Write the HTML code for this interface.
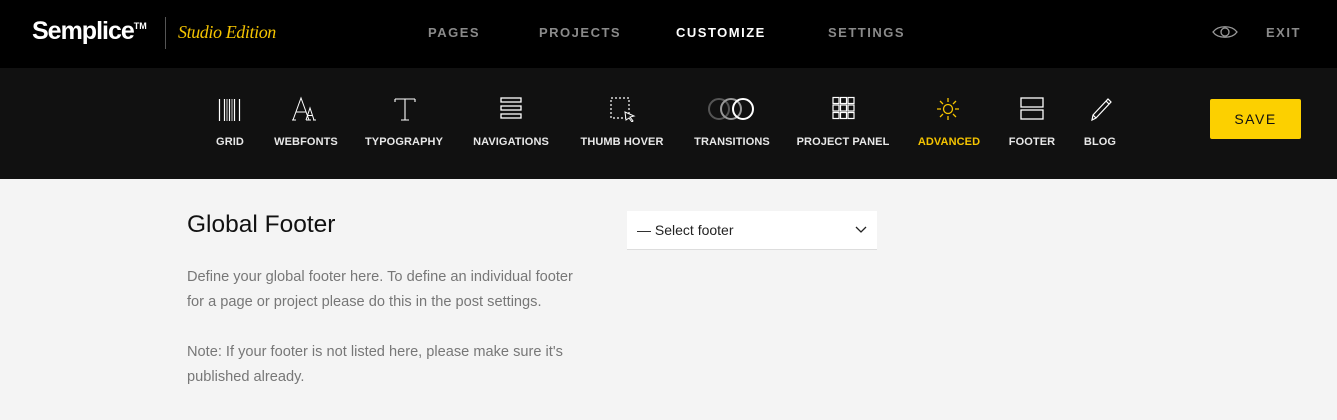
<!DOCTYPE html>
<html><head><meta charset="utf-8"><style>
*{margin:0;padding:0;box-sizing:border-box}
body{width:1337px;height:420px;background:#f4f4f4;font-family:"Liberation Sans",sans-serif;position:relative;overflow:hidden}
.top{position:absolute;left:0;top:0;width:1337px;height:68px;background:#000}
.sub{position:absolute;left:0;top:68px;width:1337px;height:111px;background:#111}
.a{position:absolute}
.nav{position:absolute;top:25px;font-size:13px;font-weight:bold;letter-spacing:1.5px;color:#8a8a8a}
.lbl{position:absolute;top:136px;font-size:11px;font-weight:bold;letter-spacing:.1px;color:#e8e8e8;transform:translateX(-50%);white-space:nowrap}
.ic{position:absolute;top:96px}
</style></head><body>
<div class="top"></div>
<div class="sub"></div>
<div class="a" style="left:32px;top:17px;color:#fff;font-size:25px;font-weight:bold;letter-spacing:-1px">Semplice<sup style="font-size:9px;vertical-align:top;position:relative;top:4px;letter-spacing:0">TM</sup></div>
<div class="a" style="left:165px;top:17px;width:1px;height:32px;background:#555"></div>
<div class="a" style="left:178px;top:22px;color:#f5c400;font-family:'Liberation Serif',serif;font-style:italic;font-size:18px;letter-spacing:-.4px">Studio Edition</div>
<div class="nav" style="left:428px">PAGES</div>
<div class="nav" style="left:539px">PROJECTS</div>
<div class="nav" style="left:676px;color:#fff">CUSTOMIZE</div>
<div class="nav" style="left:828px">SETTINGS</div>
<div class="nav" style="left:1266px">EXIT</div>
<svg class="a" style="left:1212px;top:24px" width="26" height="16" viewBox="0 0 26 16"><path d="M1 8C6 1 20 1 25 8C20 15 6 15 1 8Z" fill="none" stroke="#999" stroke-width="1.3"/><circle cx="13" cy="8" r="4" fill="none" stroke="#999" stroke-width="1.3"/></svg>

<svg class="ic" style="left:218px" width="24" height="26"><g stroke="#fff" stroke-width="1.2"><path d="M1.5 3V25M6.5 3V25M11.5 3V25M16.5 3V25M21.5 3V25"/><path d="M9 3V25M14 3V25" stroke-width=".8"/></g></svg>
<svg class="ic" style="left:292px" width="28" height="26"><g fill="none" stroke="#fff" stroke-width="1"><path d="M1 24L9 2L17 24M4 16H14M0 24H4M14 24H19"/><path d="M14 24L18 12L22 24M15.5 19.5H20.5M21 24H24"/></g></svg>
<svg class="ic" style="left:394px" width="22" height="26"><g fill="none" stroke="#fff" stroke-width="1.1"><path d="M1 3H21M1 3V6M21 3V6M11 3V24M7 24H15"/></g></svg>
<svg class="ic" style="left:500px" width="23" height="24"><g fill="none" stroke="#fff" stroke-width="1.3"><rect x="1" y="2" width="20" height="4"/><rect x="1" y="10" width="20" height="4"/><rect x="1" y="18" width="20" height="4"/></g></svg>
<svg class="ic" style="left:610px" width="26" height="26"><rect x="1" y="2" width="18" height="20" fill="none" stroke="#fff" stroke-width="1.2" stroke-dasharray="2 2"/><path d="M15 16L24 20L20 21L23 25L22 26L19 22L16 24Z" fill="#111" stroke="#fff" stroke-width="1"/></svg>
<svg class="ic" style="left:707px" width="50" height="26"><g fill="none" stroke-width="2"><circle cx="12" cy="13" r="10" stroke="#555"/><circle cx="24" cy="13" r="10" stroke="#999"/><circle cx="36" cy="13" r="10" stroke="#fff"/></g></svg>
<svg class="ic" style="left:832px" width="24" height="24"><g fill="none" stroke="#fff" stroke-width="1.2"><rect x="1" y="1.5" width="6" height="6"/><rect x="8.5" y="1.5" width="6" height="6"/><rect x="16" y="1.5" width="6" height="6"/><rect x="1" y="9" width="6" height="6"/><rect x="8.5" y="9" width="6" height="6"/><rect x="16" y="9" width="6" height="6"/><rect x="1" y="16.5" width="6" height="6"/><rect x="8.5" y="16.5" width="6" height="6"/><rect x="16" y="16.5" width="6" height="6"/></g></svg>
<svg class="ic" style="left:936px" width="25" height="26"><g fill="none" stroke="#f5c400" stroke-width="1.3"><circle cx="12" cy="13" r="4.5"/><path d="M12 2V6M12 20V24M1 13H5M19 13H23M4 5L7 8M17 18L20 21M20 5L17 8M7 18L4 21"/></g></svg>
<svg class="ic" style="left:1020px" width="26" height="26"><g fill="none" stroke="#fff" stroke-width="1.3"><rect x="1" y="2" width="22" height="9"/><rect x="1" y="14" width="22" height="9"/></g></svg>
<svg class="ic" style="left:1088px" width="26" height="26"><path d="M4 24L5 19L20 3L23 6L8 22Z M18 5L21 8 M5 19L8 22" fill="none" stroke="#fff" stroke-width="1.2"/></svg>

<div class="lbl" style="left:230px">GRID</div>
<div class="lbl" style="left:306px">WEBFONTS</div>
<div class="lbl" style="left:404px">TYPOGRAPHY</div>
<div class="lbl" style="left:511px">NAVIGATIONS</div>
<div class="lbl" style="left:622px">THUMB HOVER</div>
<div class="lbl" style="left:732px">TRANSITIONS</div>
<div class="lbl" style="left:843px">PROJECT PANEL</div>
<div class="lbl" style="left:949px;color:#f5c400">ADVANCED</div>
<div class="lbl" style="left:1032px">FOOTER</div>
<div class="lbl" style="left:1100px">BLOG</div>

<div class="a" style="left:1210px;top:99px;width:91px;height:40px;background:#fcd000;border-radius:2px;color:#111;font-size:14px;letter-spacing:1.5px;text-align:center;line-height:40px">SAVE</div>

<div class="a" style="left:187px;top:211px;font-size:24.5px;color:#111">Global Footer</div>
<div class="a" style="left:187px;top:265px;font-size:14.6px;line-height:25px;color:#777;width:440px;white-space:nowrap">Define your global footer here. To define an individual footer<br>for a page or project please do this in the post settings.<br><br>Note: If your footer is not listed here, please make sure it's<br>published already.</div>
<div class="a" style="left:627px;top:211px;width:250px;height:39px;background:#fff;border-bottom:1px solid #ddd;font-size:14px;color:#222;line-height:38px;padding-left:10px">— Select footer</div>
<svg class="a" style="left:855px;top:226px" width="12" height="8"><path d="M1 1L6 6L11 1" fill="none" stroke="#222" stroke-width="1.3"/></svg>
</body></html>
